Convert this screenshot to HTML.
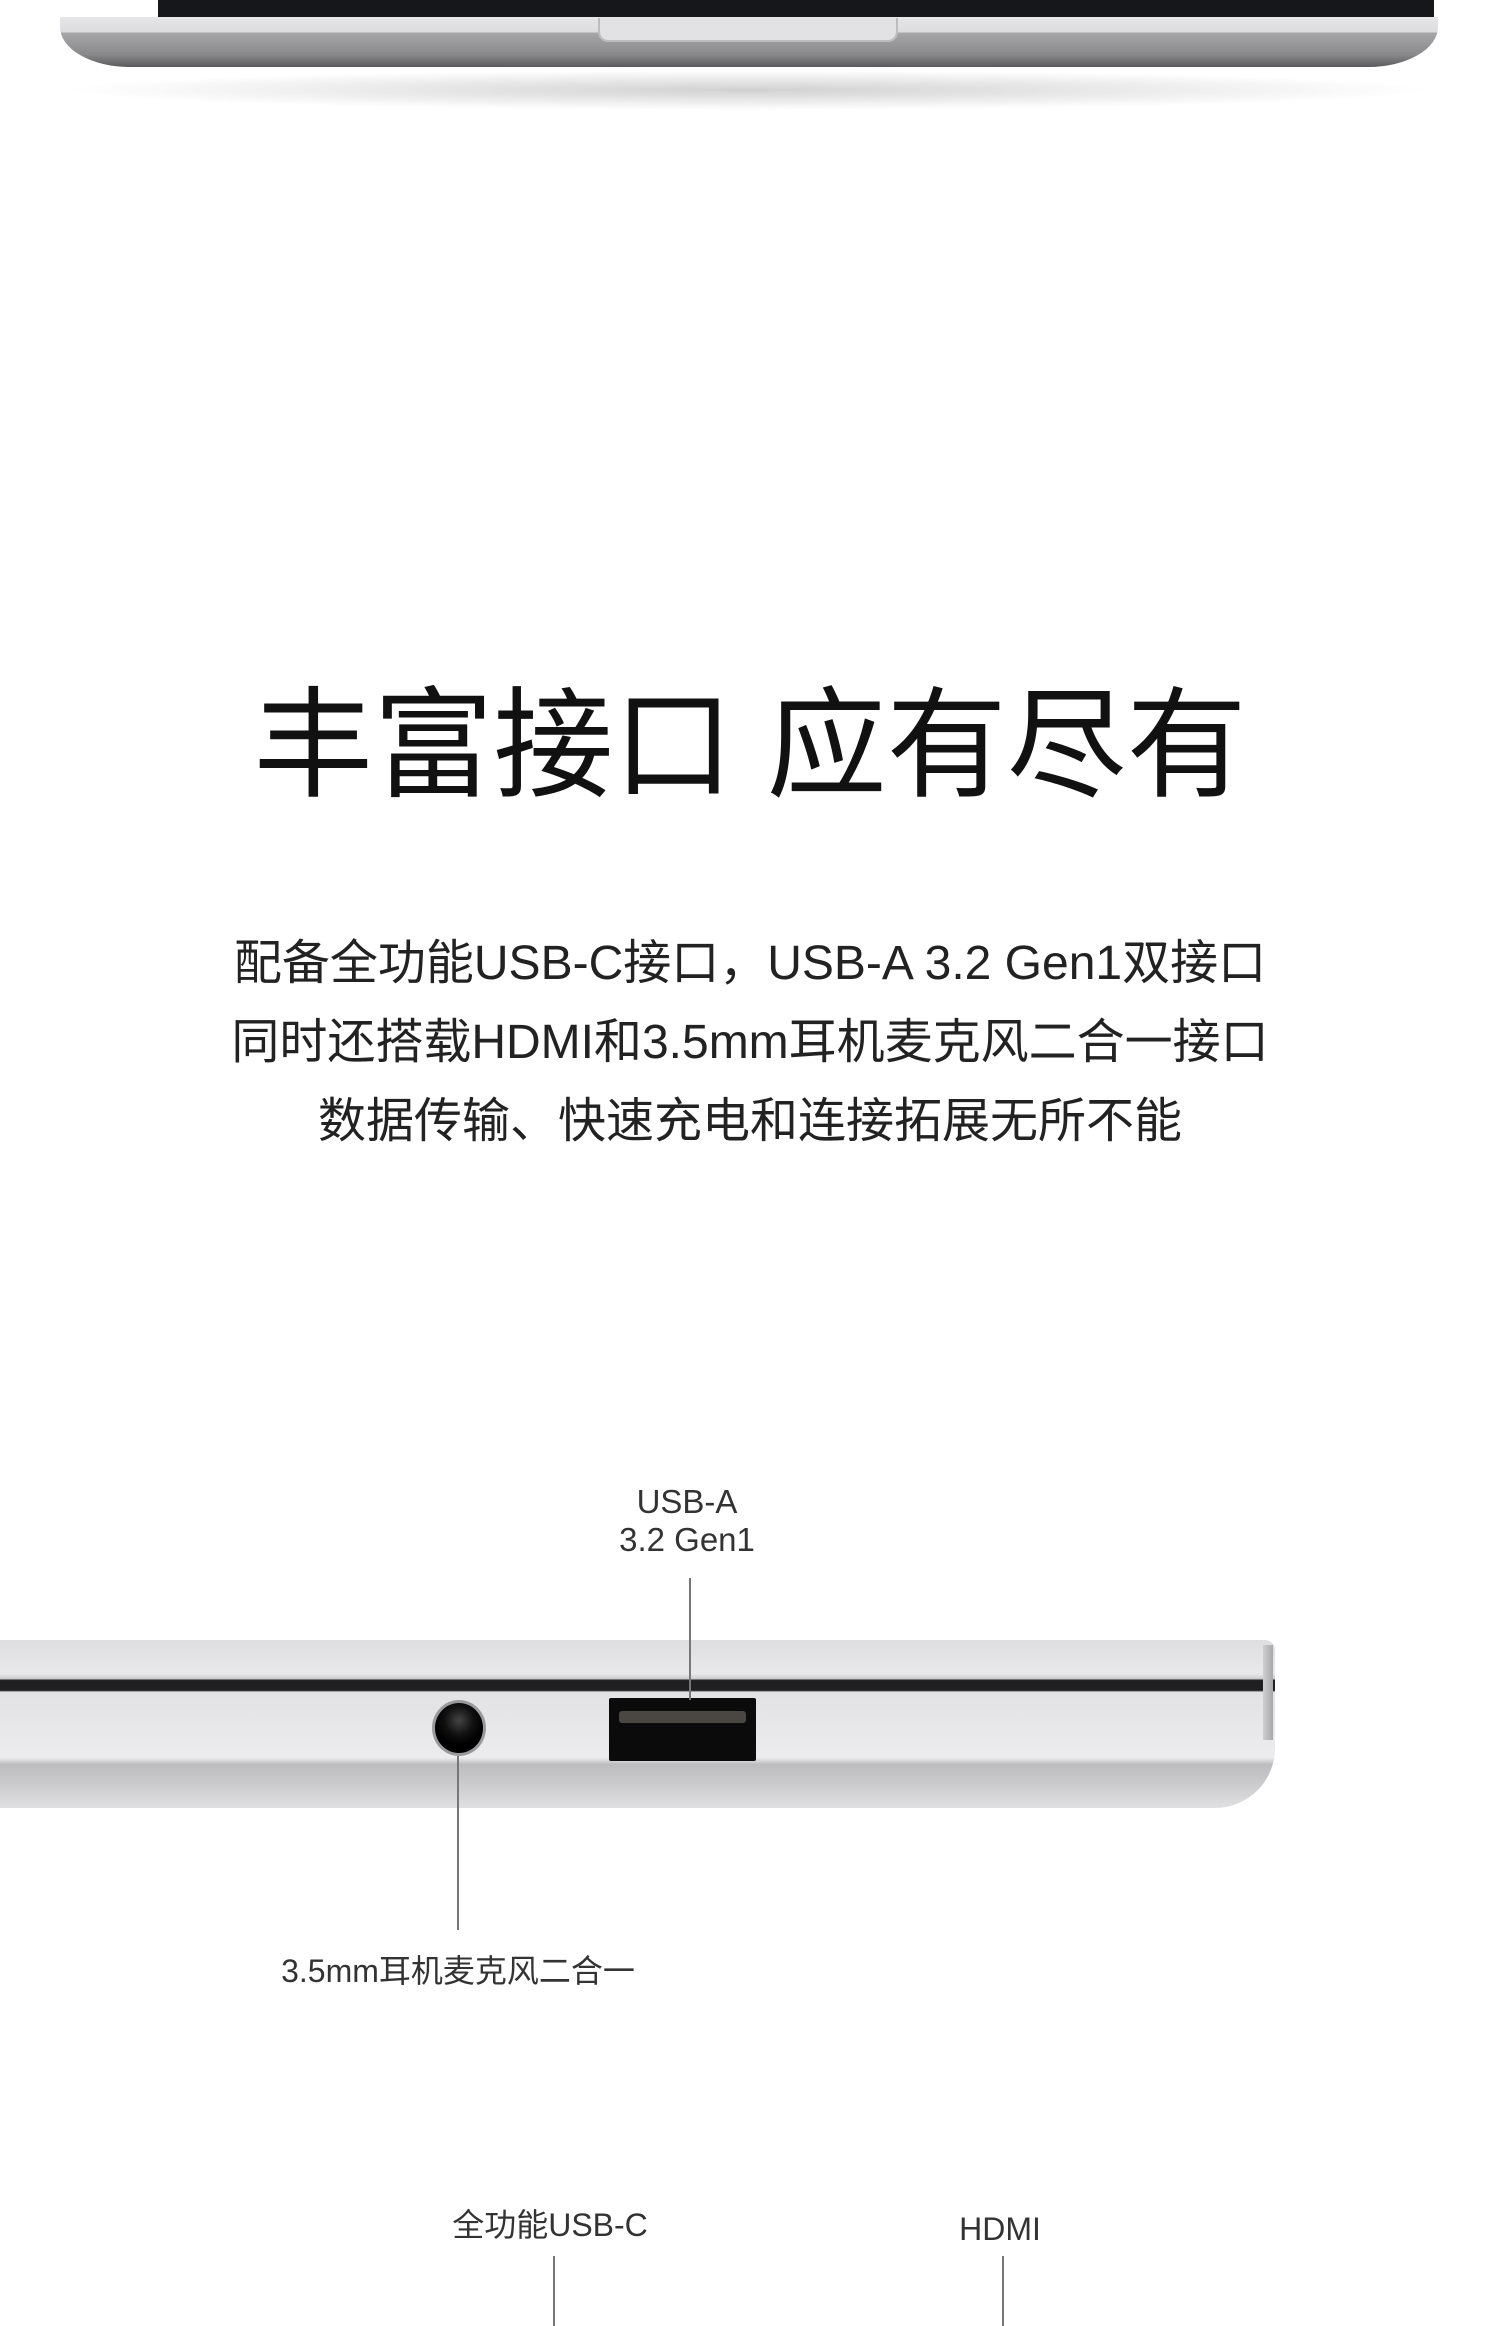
<!DOCTYPE html>
<html><head><meta charset="utf-8"><style>
body{margin:0;width:1500px;height:2322px;background:#fff;position:relative;overflow:hidden;font-family:"Liberation Sans","Noto Sans CJK SC",sans-serif;}
.a{position:absolute}
.t{position:absolute;left:0;width:1500px;text-align:center;color:#111}
.lbl{position:absolute;font-size:32px;color:#333;text-align:center;white-space:nowrap;transform:translateX(-50%)}
.ln{position:absolute;width:2px;background:#777}
</style></head><body>
<!-- top laptop -->
<div class="a" style="left:60px;top:70px;width:1376px;height:40px;border-radius:50%;background:radial-gradient(ellipse at center,rgba(0,0,0,.18),rgba(0,0,0,0) 70%)"></div>
<div class="a" style="left:158px;top:0;width:1276px;height:18px;background:#16171a"></div>
<div class="a" style="left:60px;top:17px;width:1378px;height:50px;border-radius:0 0 70px 70px/0 0 40px 40px;background:linear-gradient(#e6e6e8 0,#dcdcde 30%,#a6a6a9 32%,#8a8a8d 75%,#5a5a5c 100%)"></div>
<div class="a" style="left:598px;top:18px;width:296px;height:22px;border-radius:0 0 10px 10px;background:#e2e2e4;border:2px solid #bdbdc0;border-top:none"></div>
<!-- title -->
<div class="t" style="top:676px;font-size:120px;line-height:140px;font-weight:400">丰富接口 应有尽有</div>
<div class="t" style="top:924px;font-size:48px;line-height:79px;color:#222">配备全功能USB-C接口，USB-A 3.2 Gen1双接口<br>同时还搭载HDMI和3.5mm耳机麦克风二合一接口<br>数据传输、快速充电和连接拓展无所不能</div>
<!-- side laptop -->
<div class="a" style="left:0;top:1640px;width:1275px;height:168px;border-radius:0 10px 60px 0/0 10px 60px 0;background:linear-gradient(#dedee0 0,#e9e9eb 20%,#cfcfd2 23%,#1f1f21 24%,#1f1f21 30%,#e2e2e4 31%,#ececee 70%,#bdbdc0 74%,#cacacd 85%,#e0e0e2 100%)"></div>
<div class="a" style="left:1263px;top:1645px;width:10px;height:95px;background:linear-gradient(90deg,#cfcfd2,#a8a8ab)"></div>
<div class="a" style="left:432px;top:1700px;width:54px;height:56px;border-radius:50%;background:radial-gradient(circle at 50% 35%,#444 0,#111 35%,#000 60%);border:3px solid #9a9a9d;box-sizing:border-box"></div>
<div class="a" style="left:609px;top:1698px;width:147px;height:63px;background:#0b0b0c;border-radius:2px"></div>
<div class="a" style="left:619px;top:1711px;width:127px;height:12px;background:#4a4642;border-radius:3px"></div>
<!-- labels -->
<div class="lbl" style="left:687px;top:1483px;line-height:38px;font-size:33px">USB-A<br>3.2 Gen1</div>
<div class="ln" style="left:689px;top:1578px;height:122px"></div>
<div class="ln" style="left:457px;top:1756px;height:174px"></div>
<div class="lbl" style="left:458px;top:1946px">3.5mm耳机麦克风二合一</div>
<div class="lbl" style="left:550px;top:2200px">全功能USB-C</div>
<div class="lbl" style="left:1000px;top:2211px">HDMI</div>
<div class="ln" style="left:553px;top:2256px;height:70px"></div>
<div class="ln" style="left:1002px;top:2256px;height:70px"></div>
</body></html>
